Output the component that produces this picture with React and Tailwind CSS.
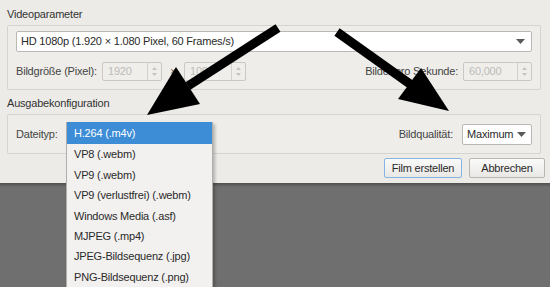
const font = { fontFamily: '"Liberation Sans", Arial, sans-serif', letterSpacing: '-0.2px' };

const Caret = ({ className = '' }) => (
  <svg width="9" height="5" viewBox="0 0 9 5" className={className}>
    <path d="M0 0 L9 0 L4.5 5 Z" fill="#5a5a5a" />
  </svg>
);

const SpinBox = ({ value, width }) => (
  <div className={`flex h-[19px] border border-[#c9c8c5] bg-[#efeeeb] rounded-[2px] ${width}`}>
    <div className="flex-1 pl-[5px] text-[#bcbbb8] leading-[17px]">{value}</div>
    <div className="w-[14px] border-l border-[#d2d1ce] flex flex-col items-center justify-center gap-[3px]">
      <svg width="5" height="3" viewBox="0 0 5 3"><path d="M0 3 L2.5 0 L5 3 Z" fill="#c4c3c0" /></svg>
      <svg width="5" height="3" viewBox="0 0 5 3"><path d="M0 0 L5 0 L2.5 3 Z" fill="#c4c3c0" /></svg>
    </div>
  </div>
);

const formats = [
  'H.264 (.m4v)',
  'VP8 (.webm)',
  'VP9 (.webm)',
  'VP9 (verlustfrei) (.webm)',
  'Windows Media (.asf)',
  'MJPEG (.mp4)',
  'JPEG-Bildsequenz (.jpg)',
  'PNG-Bildsequenz (.png)',
];

export default function App() {
  return (
    <div className="relative w-[550px] h-[287px] overflow-hidden bg-[#6f6f6f] text-[11px] text-[#2a2a2a]" style={font}>
      {/* dialog */}
      <div className="h-[183px] bg-[#ecebe8] pl-[7px] pr-[5px] pt-[6px] flex flex-col">
        <div className="h-[16px] leading-[16px] text-[#333]">Videoparameter</div>
        <div className="mt-[3px] mr-[4px] h-[65px] border border-[#d6d4d0] bg-[#eeede9] rounded-[2px] px-[8px] pt-[5px]">
          <div className="h-[21px] flex items-center justify-between bg-white border border-[#b9b8b5] rounded-[2px] pl-[4px] pr-[6px]">
            <span>HD 1080p (1.920 × 1.080 Pixel, 60 Frames/s)</span>
            <Caret />
          </div>
          <div className="mt-[10px] flex items-center">
            <span className="w-[86px] text-[#444]">Bildgröße (Pixel):</span>
            <SpinBox value="1920" width="w-[60px]" />
            <span className="w-[22px] text-center text-[#666]">×</span>
            <SpinBox value="1080" width="w-[62px]" />
            <span className="ml-auto mr-[5px] text-[#444]">Bilder pro Sekunde:</span>
            <SpinBox value="60,000" width="w-[69px]" />
          </div>
        </div>
        <div className="mt-[5px] h-[17px] leading-[17px] text-[#333]">Ausgabekonfiguration</div>
        <div className="mt-[2px] mr-[4px] h-[40px] border border-[#d6d4d0] bg-[#eeede9] rounded-[2px] px-[8px] flex items-center">
          <span className="text-[#444]">Dateityp:</span>
          <span className="ml-auto mr-[9px] text-[#444]">Bildqualität:</span>
          <div className="w-[70px] h-[21px] flex items-center justify-between bg-white border border-[#b9b8b5] rounded-[2px] pl-[4px] pr-[5px]">
            <span>Maximum</span>
            <Caret />
          </div>
        </div>
        <div className="mt-[4px] flex justify-end gap-[7px]">
          <button className="w-[78px] h-[20px] border border-[#86b5e3] rounded-[2px] bg-gradient-to-b from-[#fafafa] to-[#e9e8e5] text-[#2a2a2a]">Film erstellen</button>
          <button className="w-[76px] h-[20px] border border-[#b8b7b4] rounded-[2px] bg-gradient-to-b from-[#fafafa] to-[#e9e8e5] text-[#2a2a2a]">Abbrechen</button>
        </div>
      </div>
      <div className="h-[4px] bg-gradient-to-b from-[#4f4f4f] to-[#6f6f6f]" />

      {/* open dropdown */}
      <div className="absolute left-[66px] top-[122px] w-[147px] bg-[#f2f1ef] border-x border-[#b0afac] shadow-[2px_2px_3px_rgba(0,0,0,0.25)]">
        {formats.map((f, i) => (
          <div
            key={f}
            className={`flex items-center pl-[7px] pt-[1px] ${i === 0 ? 'h-[22px] bg-[#3c8dd6] text-white' : 'h-[20.4px] text-[#2a2a2a]'}`}
          >
            {f}
          </div>
        ))}
      </div>

      {/* annotation arrows */}
      <svg className="absolute inset-0 pointer-events-none" width="550" height="287" viewBox="0 0 550 287">
        <line x1="278" y1="28" x2="188" y2="86" stroke="#000" strokeWidth="9" />
        <polygon points="147,115 176,67 200,104" fill="#000" />
        <line x1="337" y1="32" x2="410" y2="84" stroke="#000" strokeWidth="9" />
        <polygon points="449,111 398,99 421,68" fill="#000" />
      </svg>
    </div>
  );
}
